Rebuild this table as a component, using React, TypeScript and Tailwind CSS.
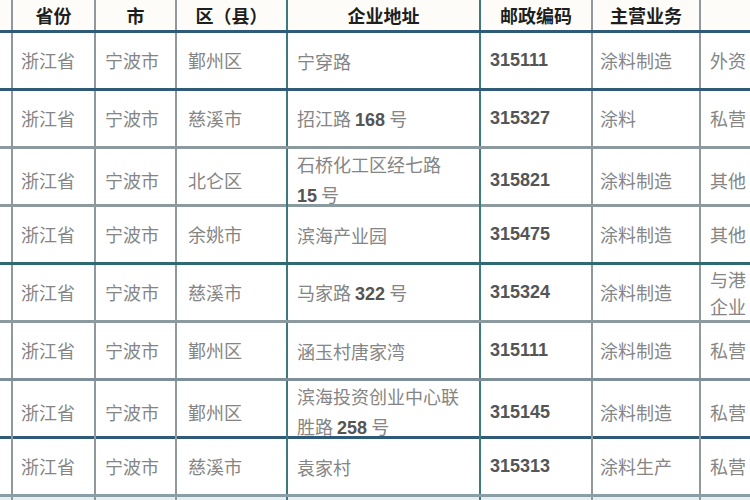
import React from "react";

type Row = {
  prov: string;
  city: string;
  district: string;
  address: React.ReactNode;
  zip: string;
  biz: string;
  kind: React.ReactNode;
  line: string;
};

const Num = ({ children }: { children: React.ReactNode }) => (
  <span className="font-['Liberation_Sans',sans-serif] font-bold text-[#555]">{children}</span>
);

const rows: Row[] = [
  { prov: "浙江省", city: "宁波市", district: "鄞州区", address: "宁穿路", zip: "315111", biz: "涂料制造", kind: "外资", line: "border-[#2f5a78]" },
  { prov: "浙江省", city: "宁波市", district: "慈溪市", address: <>招江路 <Num>168</Num> 号</>, zip: "315327", biz: "涂料", kind: "私营", line: "border-[#8a9a9f]" },
  {
    prov: "浙江省",
    city: "宁波市",
    district: "北仑区",
    address: <>石桥化工区经七路<br /><Num>15</Num> 号</>,
    zip: "315821",
    biz: "涂料制造",
    kind: "其他",
    line: "border-[#8a9a9f]",
  },
  { prov: "浙江省", city: "宁波市", district: "余姚市", address: "滨海产业园", zip: "315475", biz: "涂料制造", kind: "其他", line: "border-[#2e6a72]" },
  {
    prov: "浙江省",
    city: "宁波市",
    district: "慈溪市",
    address: <>马家路 <Num>322</Num> 号</>,
    zip: "315324",
    biz: "涂料制造",
    kind: <>与港<br />企业</>,
    line: "border-[#8a9a9f]",
  },
  { prov: "浙江省", city: "宁波市", district: "鄞州区", address: "涵玉村唐家湾", zip: "315111", biz: "涂料制造", kind: "私营", line: "border-[#7d9099]" },
  {
    prov: "浙江省",
    city: "宁波市",
    district: "鄞州区",
    address: <>滨海投资创业中心联<br />胜路 <Num>258</Num> 号</>,
    zip: "315145",
    biz: "涂料制造",
    kind: "私营",
    line: "border-[#2f5a78]",
  },
  { prov: "浙江省", city: "宁波市", district: "慈溪市", address: "袁家村", zip: "315313", biz: "涂料生产", kind: "私营", line: "border-[#8a9ea8]" },
];

const grid = "grid grid-cols-[11px_83px_81px_111px_193px_112px_108px_1fr]";
const gray = "border-l-2 border-[#8f999d]";
const teal = "border-l-2 border-[#3d7a7e]";

export default function App() {
  return (
    <div className="h-[500px] w-[750px] overflow-hidden bg-white font-['Noto_Sans_CJK_SC',sans-serif] text-[18px] text-[#858585]">
      <div className={`${grid} h-[33px] border-b-[3px] border-[#2f5a78] bg-[#fdfcf8] font-bold text-[#1e1e1e]`}>
        <div />
        <div className={`${gray} flex items-center justify-center`}>省份</div>
        <div className={`${gray} flex items-center justify-center`}>市</div>
        <div className={`${gray} flex items-center justify-center`}>区（县）</div>
        <div className={`${teal} flex items-center justify-center`}>企业地址</div>
        <div className={`${teal} flex items-center justify-center`}>邮政编码</div>
        <div className={`${gray} flex items-center justify-center`}>主营业务</div>
        <div className={gray} />
      </div>
      {rows.map((r, i) => (
        <div key={i} className={`${grid} h-[58px] border-b-[3px] ${r.line}`}>
          <div />
          <div className={`${gray} flex items-center pl-[8px]`}>{r.prov}</div>
          <div className={`${gray} flex items-center pl-[9px]`}>{r.city}</div>
          <div className={`${gray} flex items-center pl-[11px]`}>{r.district}</div>
          <div className={`${teal} flex items-center pl-[9px] leading-[30px]`}>
            <span>{r.address}</span>
          </div>
          <div className={`${teal} flex items-center pl-[9px]`}>
            <Num>{r.zip}</Num>
          </div>
          <div className={`${gray} flex items-center pl-[7px]`}>{r.biz}</div>
          <div className={`${gray} flex items-center pl-[9px] leading-[27px]`}>
            <span>{r.kind}</span>
          </div>
        </div>
      ))}
      <div className={`${grid} h-[20px] bg-[#e8eef0]`}>
        <div />
        <div className={gray} />
        <div className={gray} />
        <div className={gray} />
        <div className={teal} />
        <div className={teal} />
        <div className={gray} />
        <div className={gray} />
      </div>
    </div>
  );
}
